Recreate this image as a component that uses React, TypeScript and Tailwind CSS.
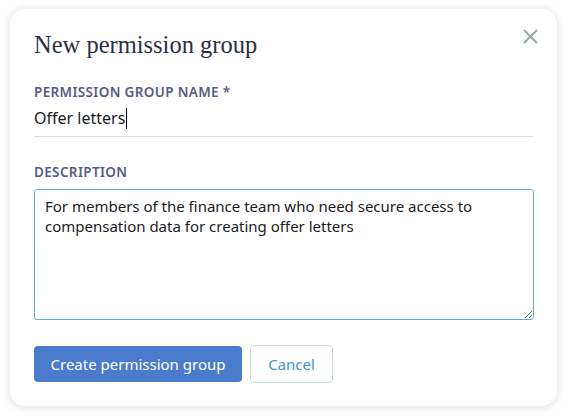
import { useState } from 'react';

const sans = { fontFamily: '"Noto Sans", "Open Sans", Arial, sans-serif' };

export default function App() {
  const [name] = useState('Offer letters');
  const [description, setDescription] = useState(
    'For members of the finance team who need secure access to compensation data for creating offer letters'
  );

  return (
    <div className="min-h-[417px] w-[568px] bg-white pl-[10px] pt-[9px]" style={sans}>
      <div className="relative flex h-[397px] w-[547px] flex-col rounded-[15px] bg-white px-[24px] pt-[22px] shadow-[0_1px_8px_rgba(0,0,0,0.14)]">
        {/* Close */}
        <button className="absolute right-[19px] top-[20px] p-0" aria-label="Close">
          <svg width="15" height="15" viewBox="0 0 15 15">
            <path d="M1 1L14 14M14 1L1 14" stroke="#8aaba8" strokeWidth="1.8" fill="none" />
          </svg>
        </button>

        <h1
          className="text-[24.5px] leading-[28px] text-[#2d2f48]"
          style={{ fontFamily: '"Liberation Serif", "DejaVu Serif", serif' }}
        >
          New permission group
        </h1>

        {/* Name */}
        <label className="mt-[25px] text-[13.5px] font-semibold uppercase leading-[16px] tracking-[0.35px] text-[#585b84]">
          Permission group name *
        </label>
        <div className="mt-[6px] flex h-[31px] items-start border-b border-[#cfe3df] text-[16px] leading-[24px] text-[#1b1b1f]">
          <span>{name}</span>
          <span className="ml-px mt-[2px] inline-block h-[21px] w-px bg-black" />
        </div>

        {/* Description */}
        <label className="mt-[27px] text-[13.5px] font-semibold uppercase leading-[16px] tracking-[0.35px] text-[#585b84]">
          Description
        </label>
        <textarea
          value={description}
          onChange={(e) => setDescription(e.target.value)}
          className="mt-[9px] h-[131px] w-[500px] resize-y rounded-[3px] border border-[#5aaee6] px-[10px] pt-[6px] text-[15px] leading-[20px] text-[#1b1b1f] outline-none"
          style={sans}
        />

        {/* Actions */}
        <div className="mt-[25px] flex items-center gap-[8px]">
          <button className="h-[36px] w-[208px] rounded-[4px] bg-[#4a7bcc] text-[15px] text-white">
            Create permission group
          </button>
          <button className="h-[38px] w-[83px] rounded-[4px] border border-[#c6dcdb] bg-white text-[15px] text-[#3a97d8]">
            Cancel
          </button>
        </div>
      </div>
    </div>
  );
}
